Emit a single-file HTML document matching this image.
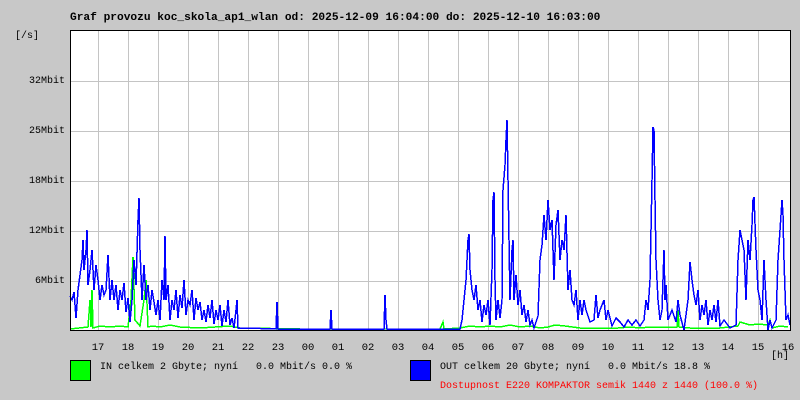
<!DOCTYPE html>
<html><head><meta charset="utf-8"><style>
html,body{margin:0;padding:0;background:#c8c8c8;}
body{width:800px;height:400px;overflow:hidden;position:relative;font-family:"Liberation Mono","DejaVu Sans Mono",monospace;font-size:10px;}
.t{position:absolute;white-space:pre;color:#000;line-height:12px;}
.h{position:absolute;top:342px;width:30px;text-align:center;line-height:12px;font-size:10.5px;}
</style></head><body>
<svg width="800" height="400" style="position:absolute;left:0;top:0" shape-rendering="crispEdges">
<rect x="70" y="30" width="720" height="300" fill="#fff"/>
<g stroke="#c4c4c4" stroke-width="1">
<path d="M98.5 30V330M128.5 30V330M158.5 30V330M188.5 30V330M218.5 30V330M248.5 30V330M278.5 30V330M308.5 30V330M338.5 30V330M368.5 30V330M398.5 30V330M428.5 30V330M458.5 30V330M488.5 30V330M518.5 30V330M548.5 30V330M578.5 30V330M608.5 30V330M638.5 30V330M668.5 30V330M698.5 30V330M728.5 30V330M758.5 30V330"/>
<path d="M70 81.5H790M70 131.5H790M70 181.5H790M70 231.5H790M70 281.5H790"/>
</g>
<polyline fill="none" stroke="#00ff00" stroke-width="1.5" points="70,329 88,327 90,300 91,327 92,290 93,328 100,326 110,327 120,326 128,327 131,300 133,257 135,320 140,326 144,300 146,280 148,327 152,326 160,327 170,325 180,327 200,328 230,326 240,328 300,329 440,329 443,322 444,329 460,328 470,326 480,327 490,326 500,327 510,325 520,327 530,326 540,328 548,327 555,325 565,326 580,328 598,328 618,328 630,327 640,328 650,327 660,327 677,327 678,310 679,327 690,328 700,328 720,328 738,326 740,322 750,325 758,324 768,325 770,320 772,328 780,326 788,327"/>
<polyline fill="none" stroke="#0000ff" stroke-width="1.5" points="70,296 72,300 74,292 76,318 78,290 80,275 82,260 83,240 84,270 86,250 87,230 88,285 90,270 92,250 94,290 96,265 98,280 100,300 102,285 104,295 106,290 108,255 110,300 112,280 114,300 116,285 118,310 120,290 122,300 124,283 126,312 128,298 130,322 132,300 134,260 136,285 138,220 139,198 140,250 142,300 144,265 146,300 148,285 150,310 152,290 154,302 156,315 158,300 160,320 162,280 164,300 165,236 166,300 168,285 170,320 172,300 174,310 176,290 178,318 180,295 182,308 184,280 186,315 188,300 190,305 192,290 194,320 196,298 198,310 200,302 202,320 204,310 206,322 208,305 210,318 212,300 214,324 216,310 218,320 220,305 222,326 224,310 226,322 228,300 230,325 232,318 234,328 236,310 237,300 238,328 245,328 276,329 277,302 278,329 330,329 331,310 332,329 384,329 385,295 386,320 387,329 460,329 462,320 464,300 466,280 468,240 469,234 470,270 472,290 474,300 476,285 478,310 480,300 482,322 484,305 486,315 488,300 490,325 492,270 493,200 494,192 495,280 496,320 498,300 500,318 502,300 503,190 505,165 506,140 507,120 508,180 509,240 510,300 512,250 513,240 514,300 516,275 518,305 520,290 522,315 524,305 526,322 528,310 530,325 532,320 534,328 538,316 540,260 542,245 544,215 546,240 548,200 550,230 552,220 554,280 556,225 558,210 560,260 562,240 564,250 566,215 568,290 570,270 572,300 574,305 576,290 578,320 580,300 582,315 584,300 586,310 590,322 594,320 596,295 598,318 600,310 604,300 606,320 608,310 612,326 616,318 620,322 624,327 628,320 632,325 636,320 640,326 644,320 646,300 648,310 650,280 652,180 653,127 654,130 655,200 656,260 658,300 660,320 662,310 664,250 665,300 666,285 668,320 672,310 676,322 678,300 680,315 684,330 688,300 690,262 692,280 694,295 696,305 698,290 700,320 702,305 704,315 706,300 708,325 710,310 712,320 714,305 716,322 718,300 720,326 724,320 730,328 736,325 738,260 740,230 742,240 744,250 746,300 748,240 750,260 752,225 753,200 754,197 756,250 758,290 760,300 762,320 764,260 766,300 768,330 770,320 772,328 776,320 778,260 780,230 782,200 783,215 784,260 786,320 788,315 790,325"/>
<rect x="70.5" y="30.5" width="720" height="300" fill="none" stroke="#000"/>
<rect x="70.5" y="360.5" width="20" height="20" fill="#00ff00" stroke="#000"/>
<rect x="410.5" y="360.5" width="20" height="20" fill="#0000ff" stroke="#000"/>
</svg>
<div class="t" style="left:70px;top:12px;font-weight:bold;font-size:11.2px">Graf provozu koc_skola_ap1_wlan od: 2025-12-09 16:04:00 do: 2025-12-10 16:03:00</div>
<div class="t" style="left:15px;top:31px">[/s]</div>
<div class="t" style="left:29px;top:76px">32Mbit</div>
<div class="t" style="left:29px;top:126px">25Mbit</div>
<div class="t" style="left:29px;top:176px">18Mbit</div>
<div class="t" style="left:29px;top:226px">12Mbit</div>
<div class="t" style="left:35px;top:276px">6Mbit</div>
<div class="h" style="left:83px">17</div><div class="h" style="left:113px">18</div><div class="h" style="left:143px">19</div><div class="h" style="left:173px">20</div><div class="h" style="left:203px">21</div><div class="h" style="left:233px">22</div><div class="h" style="left:263px">23</div><div class="h" style="left:293px">00</div><div class="h" style="left:323px">01</div><div class="h" style="left:353px">02</div><div class="h" style="left:383px">03</div><div class="h" style="left:413px">04</div><div class="h" style="left:443px">05</div><div class="h" style="left:473px">06</div><div class="h" style="left:503px">07</div><div class="h" style="left:533px">08</div><div class="h" style="left:563px">09</div><div class="h" style="left:593px">10</div><div class="h" style="left:623px">11</div><div class="h" style="left:653px">12</div><div class="h" style="left:683px">13</div><div class="h" style="left:713px">14</div><div class="h" style="left:743px">15</div><div class="h" style="left:773px">16</div>
<div class="t" style="left:771px;top:351px">[h]</div>
<div class="t" style="left:100px;top:362px">IN celkem 2 Gbyte; nyní   0.0 Mbit/s 0.0 %</div>
<div class="t" style="left:440px;top:362px">OUT celkem 20 Gbyte; nyní   0.0 Mbit/s 18.8 %</div>
<div class="t" style="left:440px;top:381px;color:#ff0000">Dostupnost E220 KOMPAKTOR semik 1440 z 1440 (100.0 %)</div>
</body></html>
